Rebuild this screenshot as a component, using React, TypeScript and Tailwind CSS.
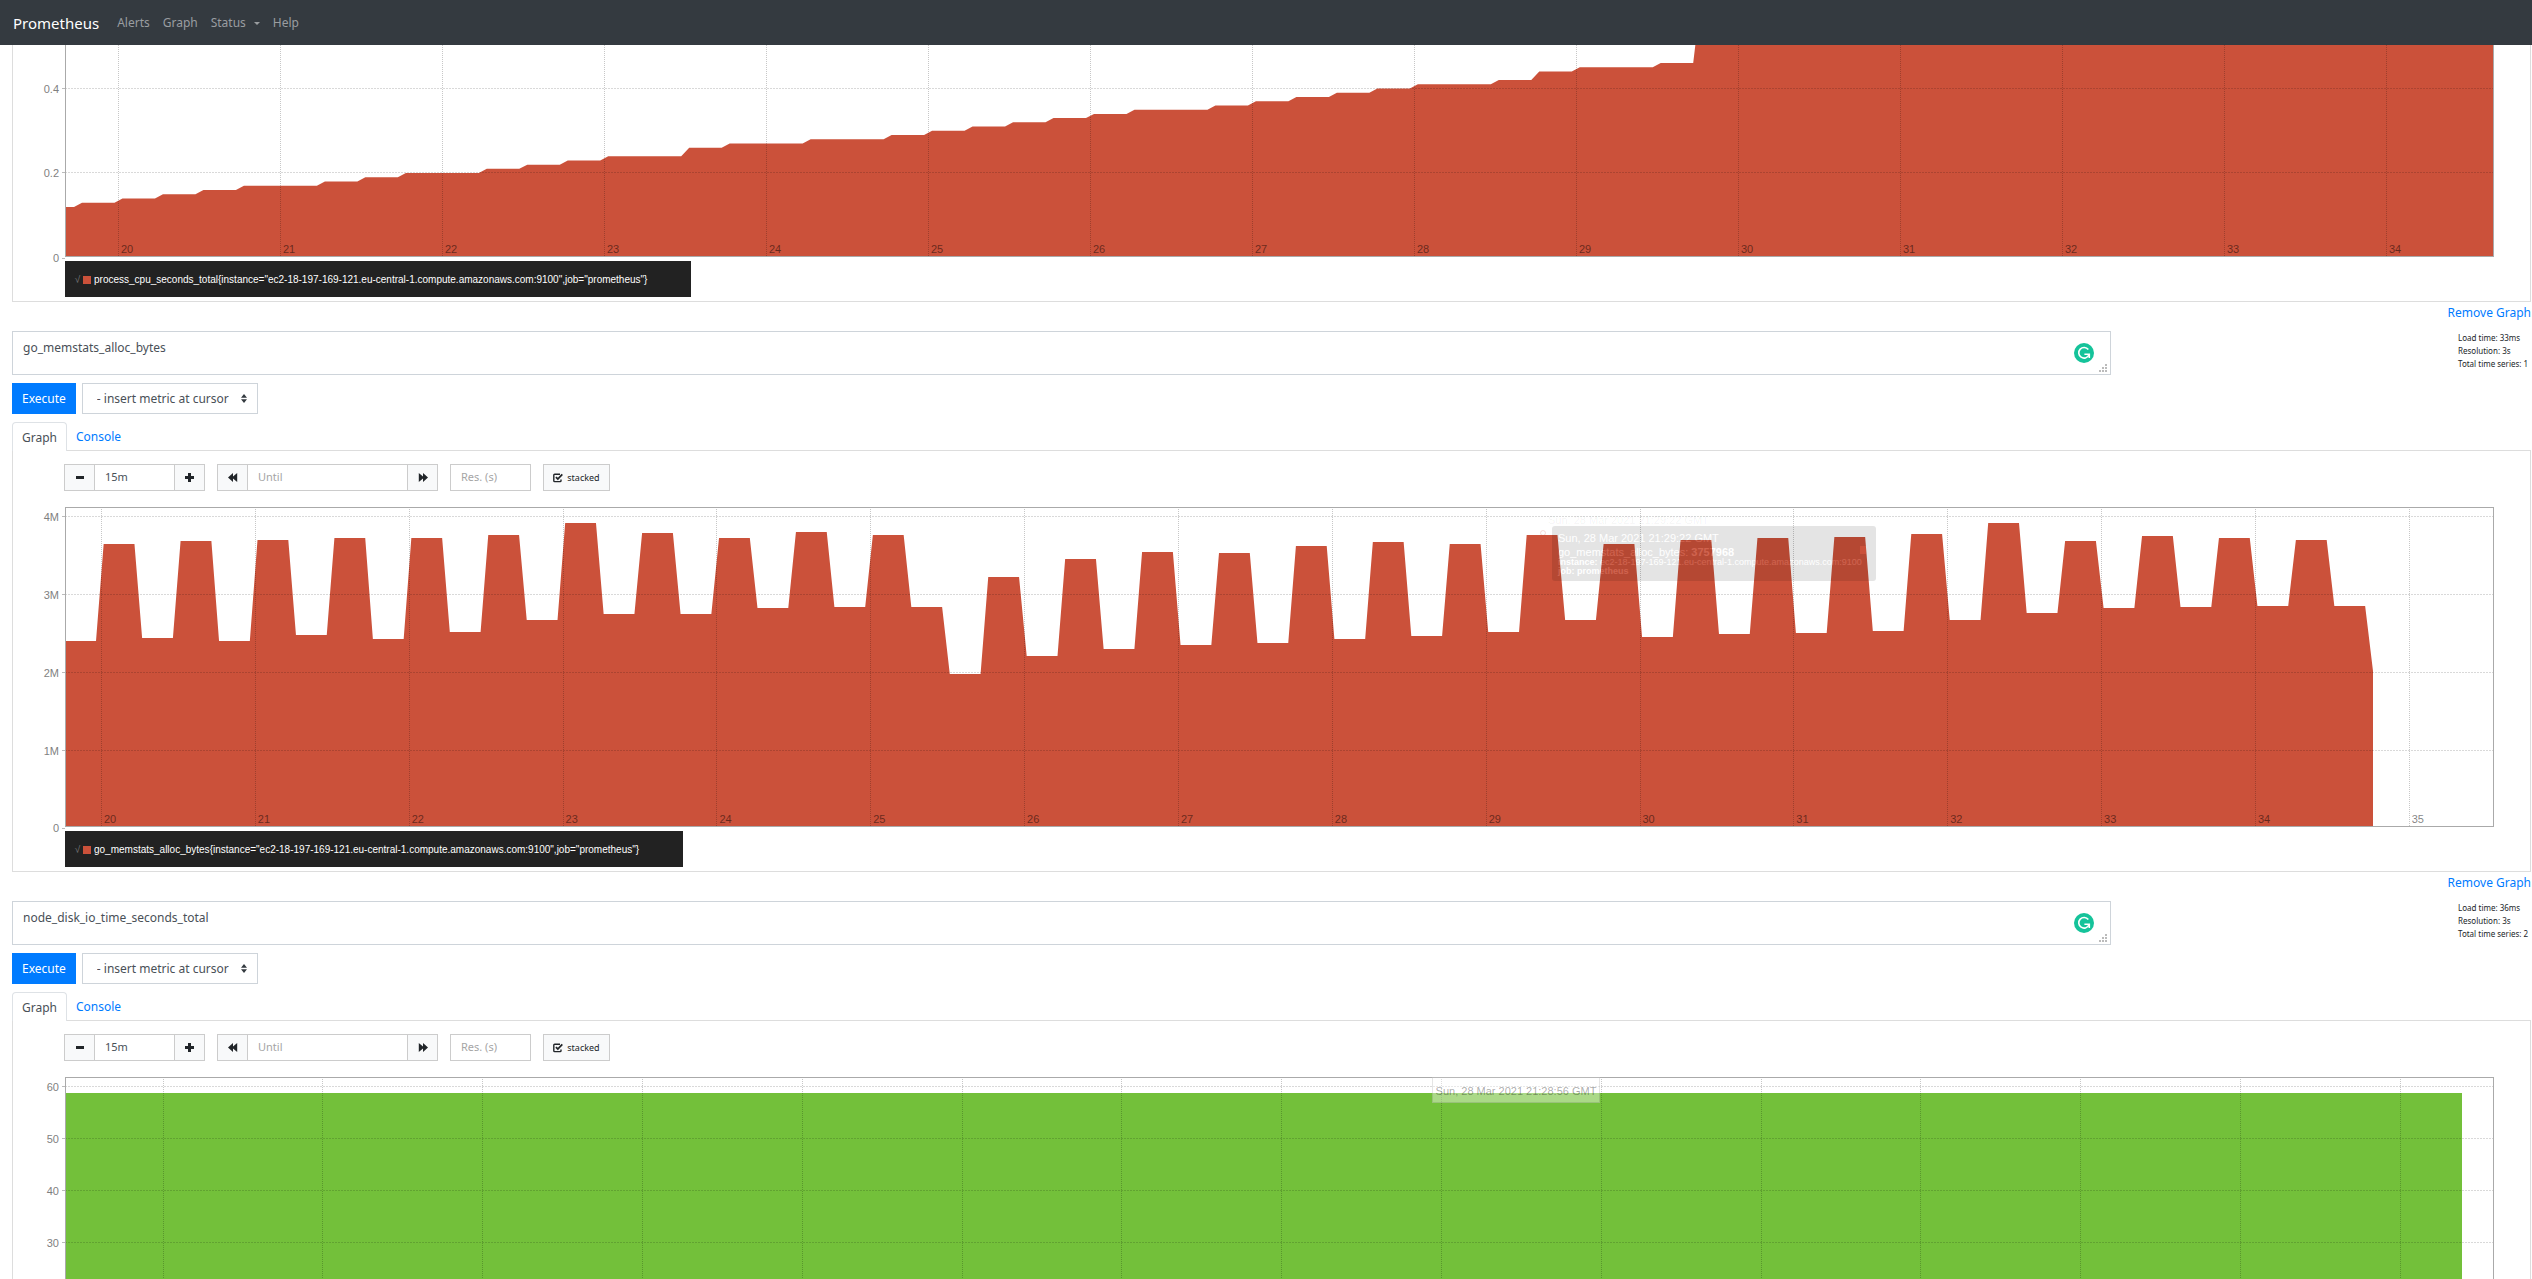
import React from "react";

type Tick = { at: number; label: string };

type PlotProps = {
  title: string;
  height: number;
  fill: string;
  area: string;
  xTicks: Tick[];
  yTicks: Tick[];
  openTop?: boolean;
  hideXLabels?: boolean;
  children?: React.ReactNode;
};

const PLOT_WIDTH = 2429;

function minutes(first: number, step: number, from: number, count: number): Tick[] {
  return Array.from({ length: count }, (_, i) => ({
    at: first + step * i,
    label: String(from + i),
  }));
}

// CPU seconds: the counter rises in ramps three seconds long, one slot every fifteen seconds.
const CPU_LEVELS = [
  13, 14, 15, 16, 17, 17, 18, 19, 20, 20, 21, 22, 23, 24, 24, 26, 27, 27, 28, 28, 29, 30, 31, 32,
  33, 34, 35, 35, 36, 37, 38, 39, 40, 41, 41, 42, 44, 45, 45, 46, 62,
];

function cpuArea(): string {
  const zero = 212.7;
  const unit = 4.23;
  let level = 12;
  let d = `M0 ${zero} L0 ${zero - level * unit}`;
  CPU_LEVELS.forEach((next, k) => {
    const x = 9 + k * 40.48;
    d += ` L${x} ${zero - level * unit} L${x + 8} ${zero - next * unit}`;
    level = next;
  });
  return `${d} L${PLOT_WIDTH} ${zero - level * unit} L${PLOT_WIDTH} ${zero} Z`;
}

// Allocated bytes: the height of each twelve-second plateau, measured down from the plot's top.
const MEM_LEVELS = [
  134, 37, 131, 34, 134, 33, 128, 31, 132, 31, 125, 28, 113, 16, 107, 26, 107, 31, 101, 25, 100,
  28, 100, 167, 70, 149, 52, 142, 45, 138, 46, 136, 39, 132, 35, 129, 37, 125, 28, 113, 37, 130,
  33, 127, 31, 126, 30, 124, 27, 113, 16, 106, 34, 101, 29, 100, 31, 99, 33, 99,
];

function memArea(): string {
  let d = "M0 320";
  MEM_LEVELS.forEach((y, n) => {
    const end = 31 + n * 38.46;
    const start = n === 0 ? 0 : end - 30.8;
    d += ` L${start} ${y} L${end} ${y}`;
  });
  return `${d} L2308 164 L2308 320 Z`;
}

function Plot({ title, height, fill, area, xTicks, yTicks, openTop, hideXLabels, children }: PlotProps) {
  return (
    <div className="flex pr-9">
      <div className="relative w-[52px] shrink-0">
        {yTicks.map((t) => (
          <div
            key={t.label}
            className="absolute right-0 flex -translate-y-1/2 items-center gap-[3px] font-['Liberation_Sans',sans-serif] text-[11px] leading-3 text-[#7f7f7f]"
            style={{ top: t.at }}
          >
            {t.label}
            <span className="h-px w-[3px] bg-[#bbb]" />
          </div>
        ))}
      </div>
      <div className="relative min-w-0 flex-1" style={{ height }}>
        <svg
          className="block h-full w-full"
          viewBox={`0 0 ${PLOT_WIDTH} ${height}`}
          preserveAspectRatio="none"
          role="img"
          aria-label={title}
        >
          <path d={area} fill={fill} />
          {yTicks.map((t) => (
            <line
              key={t.label}
              x1="0"
              x2={PLOT_WIDTH}
              y1={t.at}
              y2={t.at}
              stroke="#000"
              strokeOpacity="0.15"
              strokeDasharray="2 1"
              vectorEffect="non-scaling-stroke"
            />
          ))}
          {xTicks.map((t) => (
            <line
              key={t.at}
              x1={Math.round(t.at) + 0.5}
              x2={Math.round(t.at) + 0.5}
              y1="0"
              y2={height}
              stroke="#000"
              strokeOpacity="0.22"
              strokeDasharray="1 1"
              vectorEffect="non-scaling-stroke"
            />
          ))}
        </svg>
        <div
          className={
            openTop
              ? "absolute inset-0 border-r border-b border-l border-[#aaa]"
              : "absolute inset-0 border border-[#aaa]"
          }
        />
        {!hideXLabels &&
          xTicks.map((t) => (
            <span
              key={t.at}
              className="absolute bottom-[2px] pl-[3px] font-['Liberation_Sans',sans-serif] text-[11px] leading-3 text-black/50"
              style={{ left: `${(t.at / PLOT_WIDTH) * 100}%` }}
            >
              {t.label}
            </span>
          ))}
        {children}
      </div>
    </div>
  );
}

function Legend({ metric }: { metric: string }) {
  return (
    <div className="mt-1 mb-1 ml-[52px] flex h-9 w-fit items-center bg-[#222] pt-px pr-11 pl-[7px] font-['Liberation_Sans',sans-serif] text-[10px] leading-3 text-white">
      <span className="w-[11px] text-center text-[#777]">√</span>
      <span className="mr-[3px] h-2 w-2 bg-[#cb513a]" />
      <span>
        {metric}
        {'{instance="ec2-18-197-169-121.eu-central-1.compute.amazonaws.com:9100",job="prometheus"}'}
      </span>
    </div>
  );
}

function Backward({ flip }: { flip?: boolean }) {
  return (
    <svg
      className={flip ? "h-[9px] w-[10px] -scale-x-100" : "h-[9px] w-[10px]"}
      viewBox="0 0 10 9"
      fill="currentColor"
      aria-hidden="true"
    >
      <path d="M0 4.5 5 0v3.4L9.2 0v9L5 5.6V9z" />
    </svg>
  );
}

function SelectArrows() {
  return (
    <svg
      className="pointer-events-none absolute top-[11px] right-[11px] h-[9px] w-[6px]"
      viewBox="0 0 6 9"
      fill="#343a40"
      aria-hidden="true"
    >
      <path d="M3 0 6 3.7H0zM3 9 0 5.3h6z" />
    </svg>
  );
}

function Query({ expression, loadTime, series }: { expression: string; loadTime: string; series: string }) {
  const sideButton =
    "flex w-[31px] items-center justify-center border border-[#ccc] bg-[#f8f9fa] text-[#212529]";
  const field =
    "-mx-px border border-[#ccc] bg-white px-[10px] text-[11px] text-[#495057] placeholder:text-[#a5a5a5]";
  return (
    <>
      <div className="flex">
        <div className="relative h-11 w-5/6">
          <textarea
            aria-label="Expression"
            className="block h-11 w-full resize-none overflow-hidden border border-[#ced4da] bg-white px-[10px] py-[7px] text-xs leading-[18px] text-[#495057]"
            defaultValue={expression}
          />
          <svg className="absolute top-3 right-[17px] h-5 w-5" viewBox="0 0 20 20" aria-hidden="true">
            <circle cx="10" cy="10" r="10" fill="#15c39a" />
            <g fill="none" stroke="#fff" strokeWidth="1.6">
              <path d="M14.3 6.6A5.3 5.3 0 1 0 14.9 12" />
              <path d="M10.4 11.2h4.9v3.9" />
            </g>
          </svg>
          <svg className="absolute right-1 bottom-[3px] h-2 w-2" viewBox="0 0 8 8" fill="#bbb" aria-hidden="true">
            <path d="M6 0h2v2H6zM3 3h2v2H3zM6 3h2v2H6zM0 6h2v2H0zM3 6h2v2H3zM6 6h2v2H6z" />
          </svg>
        </div>
        <div className="ml-auto w-[73px] text-[8px] leading-[13px] whitespace-nowrap text-[#212529]">
          <div>Load time: {loadTime}</div>
          <div>Resolution: 3s</div>
          <div>Total time series: {series}</div>
        </div>
      </div>
      <div className="mt-2 flex gap-[6px]">
        <button type="button" className="h-[31px] bg-[#007bff] px-[10px] pt-px text-xs text-white">
          Execute
        </button>
        <div className="relative">
          <select
            aria-label="Insert metric"
            className="block h-[31px] w-44 appearance-none border border-[#ced4da] bg-white pt-px pl-[14px] text-xs text-[#495057]"
          >
            <option>- insert metric at cursor</option>
            <option>{expression}</option>
          </select>
          <SelectArrows />
        </div>
      </div>
      <div className="relative z-10 mt-2 flex h-[29px] text-xs" role="tablist">
        <button
          type="button"
          role="tab"
          aria-selected="true"
          className="rounded-t border border-b-0 border-[#dee2e6] bg-white px-[9px] pt-px text-[#495057]"
        >
          Graph
        </button>
        <button type="button" role="tab" aria-selected="false" className="px-[9px] pt-px text-[#007bff]">
          Console
        </button>
      </div>
      <div className="-mt-px border border-b-0 border-[#ddd] pt-[13px] pb-4">
        <div className="ml-[51px] flex h-[27px] gap-3">
          <div className="flex">
            <button type="button" aria-label="Shrink range" className={sideButton}>
              <span className="h-[3px] w-2 bg-[#212529]" />
            </button>
            <input aria-label="Range" className={`${field} w-[81px]`} defaultValue="15m" />
            <button type="button" aria-label="Grow range" className={sideButton}>
              <svg className="h-[9px] w-[9px]" viewBox="0 0 9 9" fill="currentColor" aria-hidden="true">
                <path d="M3 0h3v3h3v3H6v3H3V6H0V3h3z" />
              </svg>
            </button>
          </div>
          <div className="flex">
            <button type="button" aria-label="Rewind the end time" className={sideButton}>
              <Backward />
            </button>
            <input aria-label="Until" className={`${field} w-[161px]`} placeholder="Until" />
            <button type="button" aria-label="Advance the end time" className={sideButton}>
              <Backward flip />
            </button>
          </div>
          <input
            aria-label="Resolution in seconds"
            className="w-[81px] border border-[#ccc] bg-white px-[10px] text-[11px] placeholder:text-[#a5a5a5]"
            placeholder="Res. (s)"
          />
          <button
            type="button"
            className="flex w-[67px] items-center justify-center gap-1 border border-[#ccc] bg-[#f8f9fa] text-[9px] text-[#212529]"
          >
            <svg className="h-[10px] w-[10px]" viewBox="0 0 10 10" fill="none" stroke="currentColor" aria-hidden="true">
              <path strokeWidth="1.4" d="M7 1.2H1.7Q.8 1.2.8 2.1v5.6q0 .9.9.9h5.4q.9 0 .9-.9V6.6" />
              <path strokeWidth="1.8" d="M2.9 4.2 4.8 6 9.3 1.3" />
            </svg>
            stacked
          </button>
        </div>
      </div>
    </>
  );
}

function Section({ expression, loadTime, series, children }: {
  expression: string;
  loadTime: string;
  series: string;
  children: React.ReactNode;
}) {
  return (
    <section aria-label={expression}>
      <Query expression={expression} loadTime={loadTime} series={series} />
      <div className="border border-t-0 border-[#ddd]">{children}</div>
    </section>
  );
}

function RemoveGraph() {
  return (
    <div className="flex h-[29px] items-start justify-end pt-[2px] text-xs leading-[18px]">
      <a href="#remove" className="text-[#007bff]">
        Remove Graph
      </a>
    </div>
  );
}

export default function App() {
  const navLink = "text-[#9a9da0]";
  return (
    <div className="h-screen overflow-hidden bg-white font-['Noto_Sans',sans-serif] text-[#212529]">
      <header className="flex h-[45px] items-center bg-[#343a40] pt-px pl-[13px]">
        <a href="#home" className="mr-[18px] text-[15px] text-white">
          Prometheus
        </a>
        <nav className="flex items-center gap-[13px] text-xs">
          <a href="#alerts" className={navLink}>Alerts</a>
          <a href="#graph" className={navLink}>Graph</a>
          <a href="#status" className={`${navLink} flex items-center gap-2`}>
            Status
            <span className="border-x-[3px] border-t-[3px] border-x-transparent border-t-[#9a9da0]" />
          </a>
          <a href="#help" className={navLink}>Help</a>
        </nav>
      </header>

      <main className="pr-px pl-3">
        <div className="border border-t-0 border-[#ddd]">
          <Plot
            title="process_cpu_seconds_total"
            height={212}
            fill="#cb513a"
            area={cpuArea()}
            xTicks={minutes(53, 162, 20, 15)}
            yTicks={[
              { at: 43.5, label: "0.4" },
              { at: 127.5, label: "0.2" },
              { at: 213, label: "0" },
            ]}
            openTop
          />
          <Legend metric="process_cpu_seconds_total" />
        </div>
        <RemoveGraph />

        <Section expression="go_memstats_alloc_bytes" loadTime="33ms" series="1">
          <Plot
            title="go_memstats_alloc_bytes"
            height={320}
            fill="#cb513a"
            area={memArea()}
            xTicks={minutes(36, 153.85, 20, 16)}
            yTicks={[
              { at: 9.5, label: "4M" },
              { at: 87.5, label: "3M" },
              { at: 165.5, label: "2M" },
              { at: 243.5, label: "1M" },
              { at: 321, label: "0" },
            ]}
          >
            <div className="absolute top-[19px] left-[1487px] h-[55px] w-[324px] font-['Liberation_Sans',sans-serif] whitespace-nowrap">
              <div className="absolute -top-3 -left-1 text-[11px] leading-3 text-black/5">
                Sun, 28 Mar 2021 21:29:22 GMT
              </div>
              <div className="absolute top-1 -left-3 h-[6px] w-[6px] rounded-full border border-[#cb513a]/20" />
              <div className="h-full rounded-[3px] bg-black px-[6px] pt-[6px] text-white opacity-10">
                <div className="text-[11px] leading-3">Sun, 28 Mar 2021 21:29:22 GMT</div>
                <div className="mt-[2px] flex items-start justify-between text-[11px] leading-3">
                  <span>
                    go_memstats_alloc_bytes: <b>3757968</b>
                  </span>
                  <span className="mr-1 h-2 w-[6px] bg-[#cb513a]" />
                </div>
                <div className="text-[9px] leading-[9px] font-bold">
                  instance: <span className="font-normal">ec2-18-197-169-121.eu-central-1.compute.amazonaws.com:9100</span>
                </div>
                <div className="text-[9px] leading-[9px] font-bold">job: prometheus</div>
              </div>
            </div>
          </Plot>
          <Legend metric="go_memstats_alloc_bytes" />
        </Section>
        <RemoveGraph />

        <Section expression="node_disk_io_time_seconds_total" loadTime="36ms" series="2">
          <Plot
            title="node_disk_io_time_seconds_total"
            height={320}
            fill="#73c03a"
            area="M0 16H2397V320H0Z"
            xTicks={minutes(97.5, 159.8, 20, 15)}
            yTicks={[
              { at: 9.5, label: "60" },
              { at: 61.5, label: "50" },
              { at: 113.5, label: "40" },
              { at: 165.5, label: "30" },
            ]}
            hideXLabels
          >
            <div className="absolute top-0 left-[1367px] h-[26px] w-[168px] border border-black/10 bg-white/40 pt-[7px] text-center font-['Liberation_Sans',sans-serif] text-[11px] leading-3 whitespace-nowrap text-black/35">
              Sun, 28 Mar 2021 21:28:56 GMT
            </div>
          </Plot>
        </Section>
      </main>
    </div>
  );
}
